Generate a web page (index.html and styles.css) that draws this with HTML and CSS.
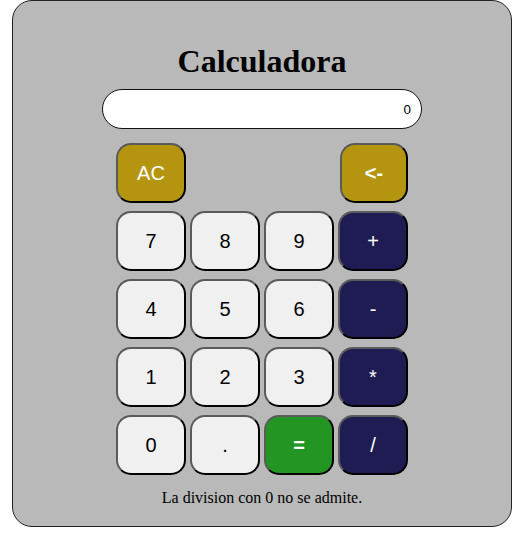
FILE: index.html
```html
<!DOCTYPE html>
<html lang="es">
<head>
<meta charset="utf-8">
<title>Calculadora</title>
<link rel="stylesheet" href="styles.css">
</head>
<body>
<div class="calc">
  <h1 class="title">Calculadora</h1>
  <input class="display" type="text" value="0" readonly>
  <div class="keys">
    <button class="key key-fn">AC</button>
    <button class="key key-fn key-back">&lt;-</button>
    <button class="key">7</button>
    <button class="key">8</button>
    <button class="key">9</button>
    <button class="key key-op">+</button>
    <button class="key">4</button>
    <button class="key">5</button>
    <button class="key">6</button>
    <button class="key key-op">-</button>
    <button class="key">1</button>
    <button class="key">2</button>
    <button class="key">3</button>
    <button class="key key-op">*</button>
    <button class="key">0</button>
    <button class="key">.</button>
    <button class="key key-eq">=</button>
    <button class="key key-op">/</button>
  </div>
  <p class="note">La division con 0 no se admite.</p>
</div>
</body>
</html>
```
FILE: styles.css
```css
html, body {
  margin: 0;
  padding: 0;
  background: #ffffff;
}
body {
  font-family: "Liberation Serif", "Times New Roman", serif;
}
.calc {
  box-sizing: border-box;
  width: 500px;
  height: 527px;
  margin: 0 0 0 12px;
  padding: 42px 0 0;
  background: #b9b9b9;
  border: 1px solid #222;
  border-radius: 20px;
  display: flex;
  flex-direction: column;
  align-items: center;
}
.title {
  margin: 0;
  font-size: 32px;
  line-height: 37px;
  font-weight: bold;
  color: #000;
}
.display {
  box-sizing: border-box;
  width: 320px;
  height: 40px;
  margin-top: 9px;
  padding: 0 10px;
  border: 1px solid #111;
  border-radius: 20px;
  background: #fff;
  text-align: right;
  font-family: "Liberation Sans", Arial, sans-serif;
  font-size: 13.33px;
  color: #000;
  outline: none;
}
.keys {
  margin-top: 14px;
  display: grid;
  grid-template-columns: repeat(4, 70px);
  grid-auto-rows: 60px;
  column-gap: 4px;
  row-gap: 8px;
}
.key {
  box-sizing: border-box;
  margin: 0;
  padding: 0;
  border-width: 2px;
  border-style: solid;
  border-color: #5a5a5a #000 #000 #5a5a5a;
  border-radius: 15px;
  background: #f0f0f0;
  color: #000;
  font-family: "Liberation Sans", Arial, sans-serif;
  font-size: 20px;
}
.key-fn {
  background: #b5950f;
  color: #fff;
}
.key-back {
  grid-column: 4;
  width: 68px;
  justify-self: end;
  font-weight: bold;
}
.key-op {
  background: #1e1c52;
  color: #fff;
}
.key-eq {
  background: #229522;
  color: #fff;
  font-weight: bold;
}
.note {
  margin: 14px 0 0;
  font-size: 16px;
  line-height: 18px;
  color: #000;
}
```
